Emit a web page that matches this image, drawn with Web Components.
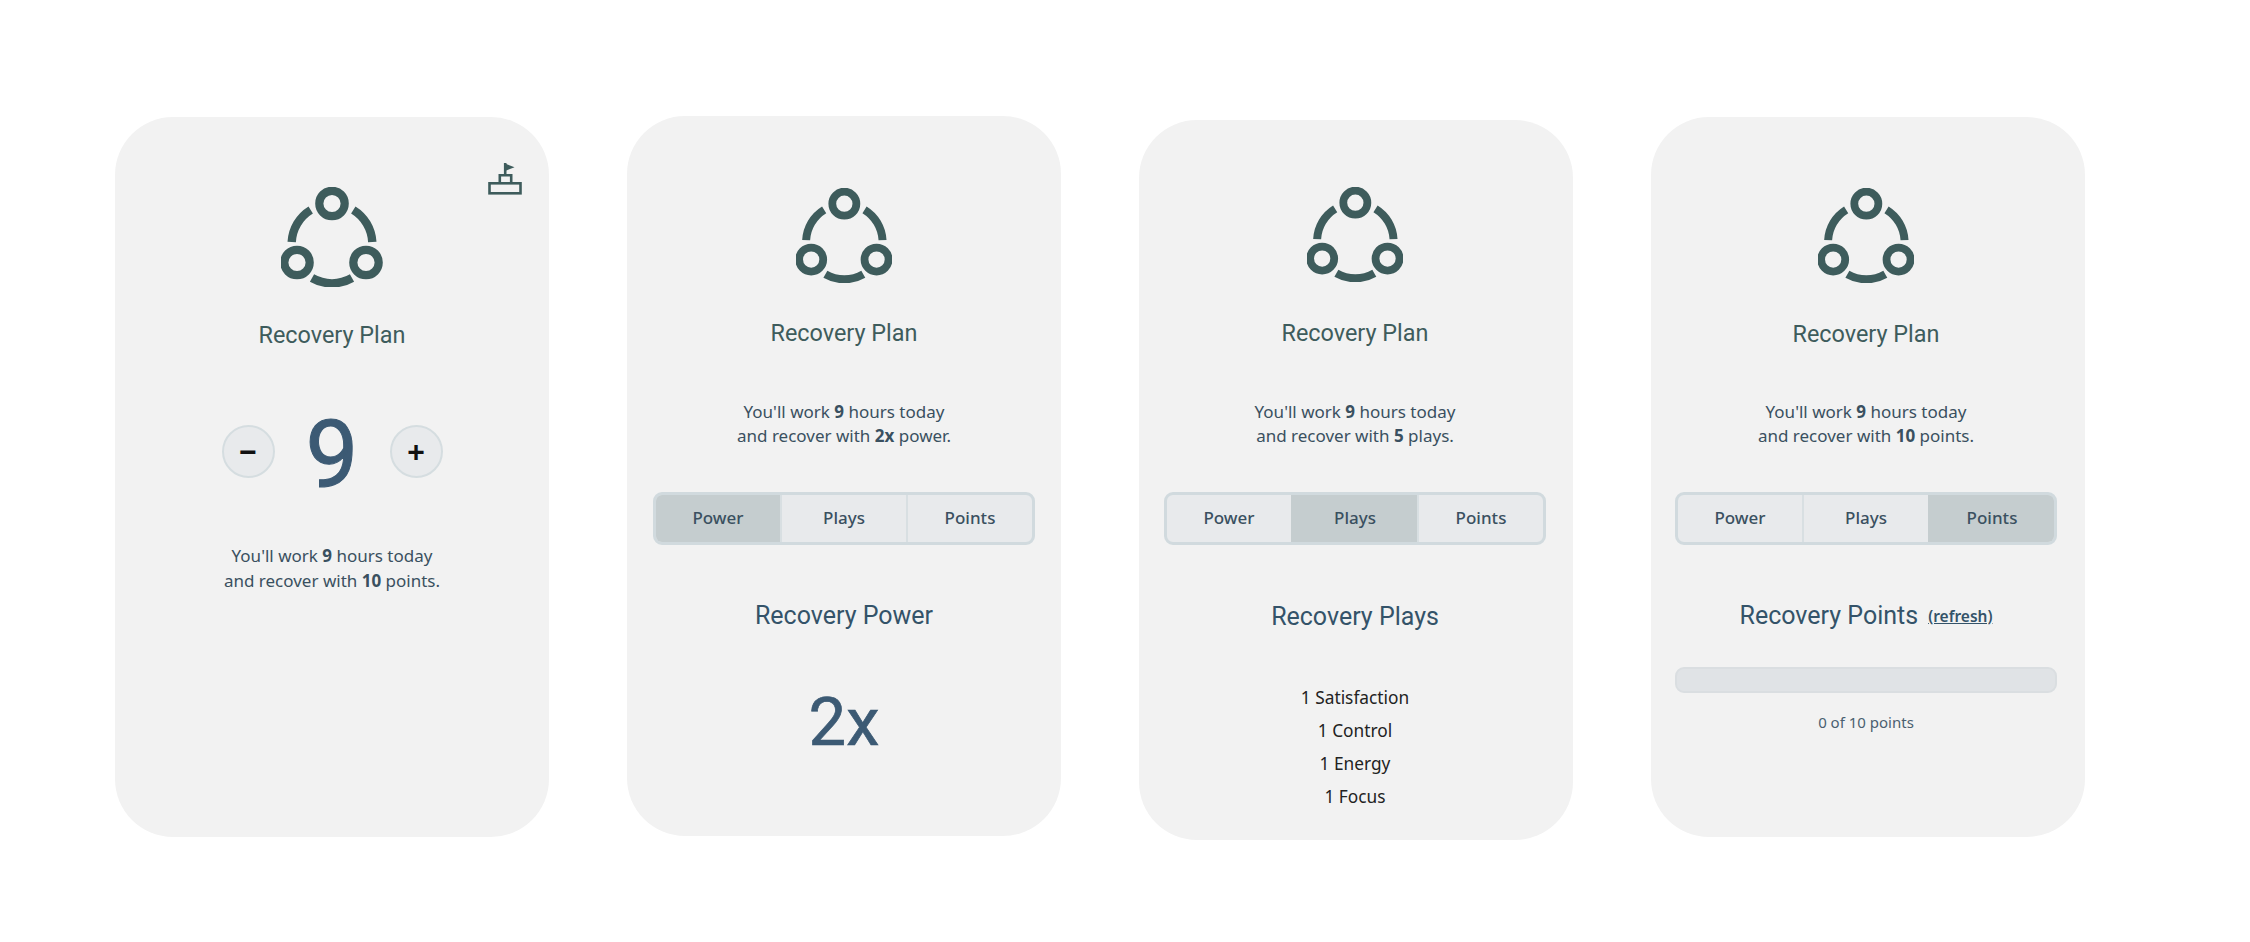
<!DOCTYPE html>
<html><head><meta charset="utf-8"><style>
html,body{margin:0;background:#fff}
body{width:2250px;height:942px;overflow:hidden;font-family:"Noto Sans",sans-serif}
main{display:flex;gap:78px;padding:117px 0 0 115px;align-items:flex-start}
</style></head><body>
<template id="t-card"><style>
:host{display:flex;flex-direction:column;align-items:center;width:434px;height:720px;box-sizing:border-box;background:#f2f2f2;border-radius:58px;position:relative;flex:none;padding:0 26px}
</style><slot></slot></template>

<template id="t-icon"><style>:host{display:block;line-height:0}svg{display:block}</style>
<svg viewBox="0 0 102 100"><g fill="none" stroke="#3e5c5c">
<g stroke-width="8.2"><circle cx="51" cy="16.5" r="12.7"/><circle cx="16" cy="75.5" r="12.7"/><circle cx="85" cy="75.5" r="12.7"/></g>
<g stroke-width="8.4"><path d="M10.7 55A40 40 0 0 1 29.7 23"/><path d="M91.3 55A40 40 0 0 0 72.3 23"/><path d="M31 91A40 40 0 0 0 71 91"/></g></g></svg></template>

<template id="t-flag"><style>:host{position:absolute;right:27px;top:45px;display:block;line-height:0}</style>
<svg width="34" height="33" viewBox="0 0 34 33"><g fill="none" stroke="#3e5c5c" stroke-width="2.6">
<rect x="1.5" y="21.3" width="31" height="10"/><path d="M11.8 21V13.3H23.2V21"/><path d="M17.2 13V1"/></g>
<path d="M17 1.5L26.5 5.2L17 9Z" fill="#3e5c5c"/></svg></template>

<template id="t-heading"><style>:host{display:block;font-family:Roboto,sans-serif;font-size:23.4px;line-height:32px;color:#3e5c5c;text-align:center;white-space:nowrap}</style><slot></slot></template>

<template id="t-sub"><style>:host{display:block;font-family:Roboto,sans-serif;font-size:25px;line-height:34px;color:#345369;text-align:center;white-space:nowrap}
::slotted(a){font-family:"Noto Sans",sans-serif;font-size:15.5px;font-weight:600;color:#345369;text-decoration:underline;margin-left:10px;vertical-align:2px}</style><slot></slot></template>

<template id="t-summary"><style>:host{display:block;font-family:"Noto Sans",sans-serif;font-size:17px;line-height:24.5px;color:#3a5060;text-align:center;white-space:nowrap}
::slotted(b){font-weight:700}</style><slot></slot></template>

<template id="t-stepper"><style>:host{display:flex;align-items:center;justify-content:center;width:100%;position:relative}
.b{width:53px;height:53px;box-sizing:border-box;border-radius:50%;background:#e8eaec;border:2.5px solid #d5dde0;display:flex;align-items:center;justify-content:center;font:700 30px/1 "Liberation Sans",sans-serif;color:#111;flex:none;padding-top:1px}
.v{width:115px;padding-top:8px;text-align:center;font-family:Roboto,sans-serif;font-weight:400;font-size:94px;line-height:100px;color:#3c5a74;-webkit-text-stroke:1px #3c5a74}
</style><span class="b">&#8722;</span><span class="v"><slot></slot></span><span class="b">+</span></template>

<template id="t-seg"><style>:host{display:flex;width:382px;height:53px;box-sizing:border-box;border:3px solid #d1dade;border-radius:9px;overflow:hidden;background:#e8eaec;flex:none}
</style><slot></slot></template>

<template id="t-segbtn"><style>:host{flex:1 1 0;display:flex;align-items:center;justify-content:center;padding-bottom:2px;font-family:"Noto Sans",sans-serif;font-size:17px;font-weight:500;color:#3a5060;border-left:2px solid #d8dfe2}
:host(:first-child){border-left:0}
:host([active]){background:#c5cdcf;border-left-color:#c5cdcf}
</style><slot></slot></template>

<template id="t-value"><style>:host{display:block;font-family:Roboto,sans-serif;font-weight:400;font-size:67px;line-height:80px;color:#3c5a74;text-align:center;-webkit-text-stroke:.7px #3c5a74}</style><slot></slot></template>

<template id="t-list"><style>:host{display:flex;flex-direction:column;align-items:center;font-family:"Noto Sans",sans-serif;font-size:17.3px;line-height:33px;color:#222}</style><slot></slot></template>

<template id="t-progress"><style>:host{display:block;width:382px;height:26px;box-sizing:border-box;background:#e0e3e6;border:2px solid #dadee1;border-radius:9px;flex:none}</style></template>

<template id="t-note"><style>:host{display:block;font-family:"Noto Sans",sans-serif;font-size:15px;line-height:22px;color:#4a6070;text-align:center}</style><slot></slot></template>

<main>
<recovery-card>
  <flag-icon></flag-icon>
  <plan-icon style="width:102px;margin-top:70px"></plan-icon>
  <plan-heading style="margin-top:32px">Recovery Plan</plan-heading>
  <hour-stepper style="margin-top:46px">9</hour-stepper>
  <plan-summary style="margin-top:39px">You'll work <b>9</b> hours today<br>and recover with <b>10</b> points.</plan-summary>
</recovery-card>
<recovery-card style="margin-top:-1px">
  <plan-icon style="width:96.7px;margin-top:72px"></plan-icon>
  <plan-heading style="margin-top:34px">Recovery Plan</plan-heading>
  <plan-summary style="margin-top:51px">You'll work <b>9</b> hours today<br>and recover with <b>2x</b> power.</plan-summary>
  <seg-control style="margin-top:43px"><seg-btn active>Power</seg-btn><seg-btn>Plays</seg-btn><seg-btn>Points</seg-btn></seg-control>
  <plan-sub style="margin-top:54px">Recovery Power</plan-sub>
  <big-value style="margin-top:49px">2x</big-value>
</recovery-card>
<recovery-card style="margin-top:3px;padding-right:28px">
  <plan-icon style="width:96.7px;margin-top:67px"></plan-icon>
  <plan-heading style="margin-top:35px">Recovery Plan</plan-heading>
  <plan-summary style="margin-top:51px">You'll work <b>9</b> hours today<br>and recover with <b>5</b> plays.</plan-summary>
  <seg-control style="margin-top:43px"><seg-btn>Power</seg-btn><seg-btn active>Plays</seg-btn><seg-btn>Points</seg-btn></seg-control>
  <plan-sub style="margin-top:55px">Recovery Plays</plan-sub>
  <play-list style="margin-top:47px"><span>1 Satisfaction</span><span>1 Control</span><span>1 Energy</span><span>1 Focus</span></play-list>
</recovery-card>
<recovery-card style="padding-right:30px">
  <plan-icon style="width:96.7px;margin-top:71px"></plan-icon>
  <plan-heading style="margin-top:35px">Recovery Plan</plan-heading>
  <plan-summary style="margin-top:50px">You'll work <b>9</b> hours today<br>and recover with <b>10</b> points.</plan-summary>
  <seg-control style="margin-top:43px"><seg-btn>Power</seg-btn><seg-btn>Plays</seg-btn><seg-btn active>Points</seg-btn></seg-control>
  <plan-sub style="margin-top:54px">Recovery Points<a>(refresh)</a></plan-sub>
  <plan-progress style="margin-top:34px"></plan-progress>
  <plan-note style="margin-top:18px">0 of 10 points</plan-note>
</recovery-card>
</main>
<script>
const map={'recovery-card':'t-card','plan-icon':'t-icon','flag-icon':'t-flag','plan-heading':'t-heading','plan-sub':'t-sub','plan-summary':'t-summary','hour-stepper':'t-stepper','seg-control':'t-seg','seg-btn':'t-segbtn','big-value':'t-value','play-list':'t-list','plan-progress':'t-progress','plan-note':'t-note'};
for(const [tag,id] of Object.entries(map)){
  customElements.define(tag,class extends HTMLElement{
    constructor(){super();this.attachShadow({mode:'open'}).appendChild(document.getElementById(id).content.cloneNode(true));}
  });
}
</script>
</body></html>
